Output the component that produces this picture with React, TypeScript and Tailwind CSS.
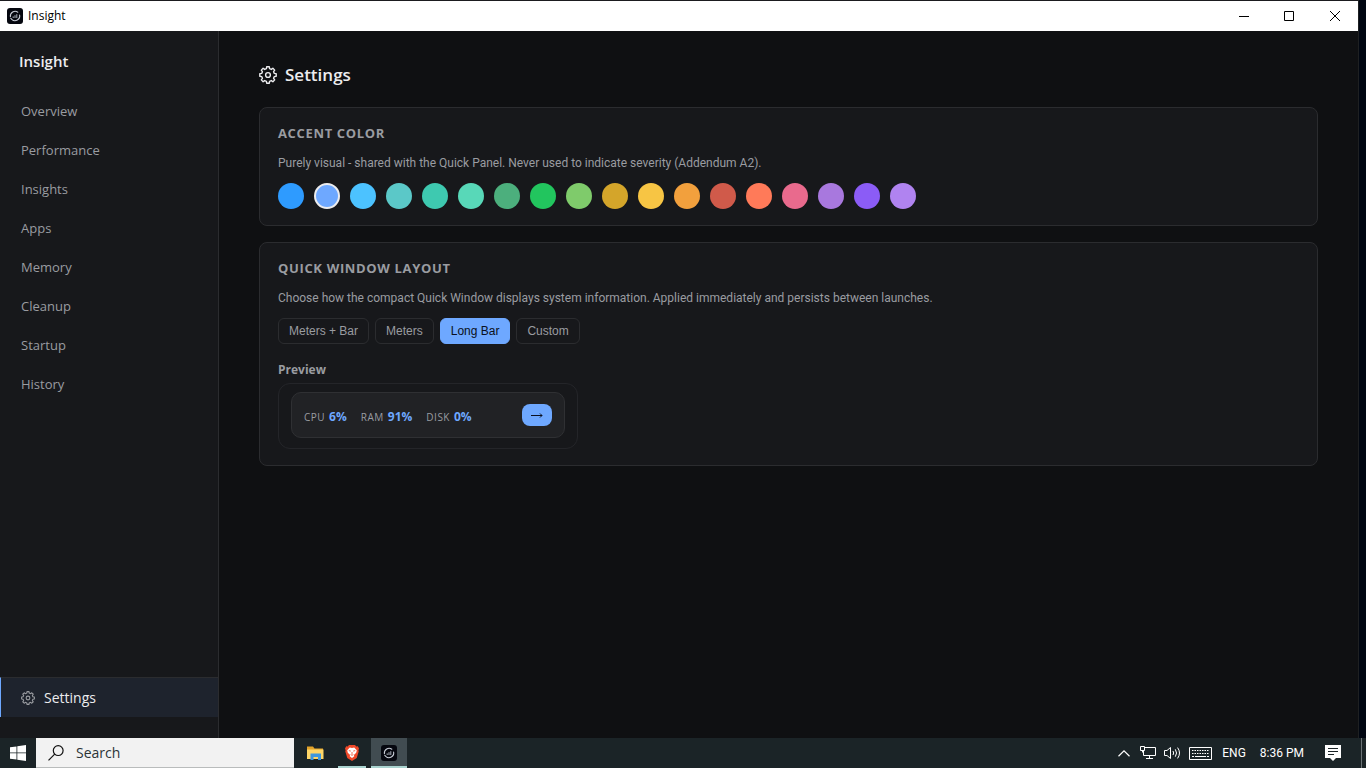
import React from "react";

const navItems = ["Overview", "Performance", "Insights", "Apps", "Memory", "Cleanup", "Startup", "History"];

const accents = [
  { name: "Azure", cls: "bg-[#2e9bff]" },
  { name: "Periwinkle", cls: "bg-[#6ea8ff]" },
  { name: "Sky", cls: "bg-[#4cc2ff]" },
  { name: "Lagoon", cls: "bg-[#5bc8c8]" },
  { name: "Teal", cls: "bg-[#3ec9b0]" },
  { name: "Mint", cls: "bg-[#58d8b8]" },
  { name: "Jade", cls: "bg-[#4caf7d]" },
  { name: "Green", cls: "bg-[#22c55e]" },
  { name: "Lime", cls: "bg-[#7fcb6b]" },
  { name: "Gold", cls: "bg-[#d4a52a]" },
  { name: "Yellow", cls: "bg-[#f7c544]" },
  { name: "Orange", cls: "bg-[#f2a03d]" },
  { name: "Brick", cls: "bg-[#d05a4a]" },
  { name: "Coral", cls: "bg-[#ff7a59]" },
  { name: "Rose", cls: "bg-[#e96a8d]" },
  { name: "Lavender", cls: "bg-[#a878de]" },
  { name: "Violet", cls: "bg-[#8b5cf6]" },
  { name: "Orchid", cls: "bg-[#b083f0]" },
];

const layouts = ["Meters + Bar", "Meters", "Long Bar", "Custom"];

const stats = [
  { label: "CPU", value: "6%" },
  { label: "RAM", value: "91%" },
  { label: "DISK", value: "0%" },
];

// eight teeth, each one valley -> tip -> valley
const gearPoints = Array.from({ length: 8 })
  .flatMap((_, i) =>
    [
      [-14, 6.5],
      [-9, 8.3],
      [9, 8.3],
      [14, 6.5],
    ].map(([deg, r]) => {
      const a = ((i * 45 + deg) * Math.PI) / 180;
      return `${(9 + r * Math.cos(a)).toFixed(2)},${(9 + r * Math.sin(a)).toFixed(2)}`;
    })
  )
  .join(" ");

function Gear({ size, className }: { size: number; className?: string }) {
  return (
    <svg
      width={size}
      height={size}
      viewBox="0 0 18 18"
      fill="none"
      stroke="currentColor"
      strokeWidth="1.4"
      strokeLinejoin="round"
      className={className}
      aria-hidden="true"
    >
      <polygon points={gearPoints} />
      <circle cx="9" cy="9" r="2.4" />
    </svg>
  );
}

function AppLogo() {
  return (
    <svg width="16" height="16" viewBox="0 0 16 16" fill="none" aria-hidden="true">
      <rect width="16" height="16" rx="3" fill="#05070f" />
      <path d="M3.4 8.6A4.7 4.7 0 0 1 10.8 4.2" stroke="#c9ced8" strokeWidth="1.1" strokeLinecap="round" />
      <path d="M12.6 7A4.7 4.7 0 0 1 4.8 11.4L3.8 10.4" stroke="#c9ced8" strokeWidth="1.1" strokeLinecap="round" />
      <path d="M6.2 8.4v1.6M8 7.2v2.8M9.8 6.2v3.8" stroke="#aab1bd" strokeWidth="1" />
    </svg>
  );
}

function TitleBar() {
  return (
    <header className="flex h-[31px] items-center border-t border-[#1b1b1f] bg-white text-black">
      <div className="flex flex-1 items-center gap-[5px] pl-[7px]">
        <AppLogo />
        <span className="text-xs">Insight</span>
      </div>
      <button aria-label="Minimize" className="flex h-full w-[45px] items-center justify-center">
        <svg width="10" height="10" viewBox="0 0 10 10" stroke="currentColor"><path d="M0 5.5h10" /></svg>
      </button>
      <button aria-label="Maximize" className="flex h-full w-[46px] items-center justify-center">
        <svg width="10" height="10" viewBox="0 0 10 10" fill="none" stroke="currentColor"><path d="M.5.5h9v9h-9z" /></svg>
      </button>
      <button aria-label="Close" className="flex h-full w-[46px] items-center justify-center">
        <svg width="10" height="10" viewBox="0 0 10 10" stroke="currentColor"><path d="M0 0l10 10M10 0L0 10" /></svg>
      </button>
    </header>
  );
}

function Sidebar() {
  return (
    <aside className="flex w-[219px] shrink-0 flex-col border-r border-[#2b2c2f] bg-[#17181b] pb-[21px]">
      <div className="px-[19px] pt-[19px] pb-5 text-[15px] leading-[22px] font-semibold text-[#ececee]">Insight</div>
      <nav className="flex flex-1 flex-col text-[13px] text-[#9a9ca1]">
        {navItems.map((item) => (
          <a key={item} href="#" className="flex h-[39px] items-center border-l border-transparent pl-5">
            {item}
          </a>
        ))}
        <a
          href="#"
          aria-current="page"
          className="mt-auto flex h-10 items-center gap-[9px] border-t border-l border-t-[#2b2c2f] border-l-[#6ea8ff] bg-[#1e232d] pl-5 text-sm text-[#ececee]"
        >
          <Gear size={14} className="text-[#9a9ca1]" />
          Settings
        </a>
      </nav>
    </aside>
  );
}

function Card({ title, desc, children }: { title: string; desc: string; children: React.ReactNode }) {
  return (
    <section className="rounded-lg border border-[#2b2c2f] bg-[#17181b] px-[18px] py-4">
      <h2 className="mb-3 text-[13px] leading-[18px] font-bold tracking-wider text-[#9a9ca1] uppercase">{title}</h2>
      <p className="mb-[10px] font-['Roboto',sans-serif] text-xs leading-[19px] text-[#9a9ca1]">{desc}</p>
      {children}
    </section>
  );
}

function Preview() {
  return (
    <div className="w-[300px] rounded-xl border border-[#242529] px-3 pt-2 pb-[10px]">
      <div className="flex h-[46px] items-center rounded-[10px] border border-[#2f3033] bg-[#212225] px-3">
        <div className="flex gap-[14px] pt-[3px]">
          {stats.map((s) => (
            <div key={s.label} className="flex items-baseline gap-1">
              <span className="text-[10px] tracking-wider text-[#9a9ca1]">{s.label}</span>
              <span className="text-xs font-bold text-[#6ea8ff]">{s.value}</span>
            </div>
          ))}
        </div>
        <button aria-label="Open" className="ml-auto flex h-[22px] w-[30px] items-center justify-center rounded-lg bg-[#6ea8ff] text-[#0b1020]">
          <svg width="12" height="7" viewBox="0 0 12 7" fill="none" stroke="currentColor">
            <path d="M0 3.5h11M9 1.5L11 3.5 9 5.5" />
          </svg>
        </button>
      </div>
    </div>
  );
}

function Main() {
  return (
    <main className="flex-1 bg-[#0f1012] px-10 pt-8">
      <h1 className="mb-5 flex items-center gap-2 text-[17px] leading-6 font-semibold text-[#ececee]">
        <Gear size={18} />
        Settings
      </h1>
      <div className="flex flex-col gap-4">
        <Card title="Accent color" desc="Purely visual - shared with the Quick Panel. Never used to indicate severity (Addendum A2).">
          <div className="flex flex-wrap gap-[10px]">
            {accents.map((a, i) => (
              <button
                key={a.name}
                aria-label={a.name}
                className={`size-[26px] rounded-full ${a.cls} ${i === 1 ? "border-2 border-[#ececee]" : ""}`}
              />
            ))}
          </div>
        </Card>
        <Card
          title="Quick window layout"
          desc="Choose how the compact Quick Window displays system information. Applied immediately and persists between launches."
        >
          <div className="flex gap-[6px] font-['Liberation_Sans',sans-serif] text-xs">
            {layouts.map((l) => (
              <button
                key={l}
                className={`h-[26px] rounded-md border px-[10px] ${
                  l === "Long Bar" ? "border-[#6ea8ff] bg-[#6ea8ff] text-[#0b1020]" : "border-[#2b2c2f] text-[#9a9ca1]"
                }`}
              >
                {l}
              </button>
            ))}
          </div>
          <h3 className="mt-4 mb-1 text-xs leading-[19px] font-bold text-[#9a9ca1]">Preview</h3>
          <Preview />
        </Card>
      </div>
    </main>
  );
}

function Taskbar() {
  return (
    <footer className="flex h-[30px] items-stretch bg-[#1b2427] text-white">
      <button aria-label="Start" className="flex w-9 items-center justify-center">
        <svg width="16" height="16" viewBox="0 0 16 16" fill="currentColor">
          <path d="M0 2.3L6.5 1.4V7.5H0zM7.3 1.3L16 0v7.5H7.3zM0 8.3h6.5v6.2L0 13.7zM7.3 8.3H16V16l-8.7-1.3z" />
        </svg>
      </button>
      <label className="flex w-[258px] items-center gap-3 border-b border-[#b9bcbc] bg-[#f2f2f2] pl-3 text-[#1f2a2e]">
        <svg width="16" height="16" viewBox="0 0 16 16" fill="none" stroke="#111" strokeWidth="1.2">
          <circle cx="10.2" cy="5.6" r="4.9" />
          <path d="M6.7 9.1L.5 15.4" />
        </svg>
        <input type="text" placeholder="Search" aria-label="Search" className="w-40 bg-transparent text-sm outline-none placeholder:text-[#2b3437]" />
      </label>
      <div className="flex gap-[1px] pl-[3px]">
        <button aria-label="File Explorer" className="flex w-9 items-center justify-center">
          <svg width="17" height="15" viewBox="0 0 17 15">
            <path d="M0 .5h6L7.5 2.5H16V5H0z" fill="#e3a32a" />
            <path d="M0 3.5h16.5V13H0z" fill="#ffd667" />
            <path d="M3.5 7.5H14V14h-3v-3H6.500v3h-3z" fill="#3f97dd" />
          </svg>
        </button>
        <button aria-label="Brave" className="relative flex w-9 items-center justify-center">
          <svg width="14" height="16" viewBox="0 0 14 16">
            <path d="M4 0h6l1.3 1.4 1.5-.1L14 3.6l-.6 1.6.3 1.2-2 6.6L7 16l-4.7-3-2-6.6.3-1.2L0 3.6l1.2-2.3 1.5.1z" fill="#f0492a" />
            <path d="M7 3l2.2-.5 2.6 2.7-.6 2.6-2.3 2.1.4 1.3L7 13l-2.3-1.8.4-1.3-2.3-2.1-.6-2.6 2.6-2.7z" fill="#fff" />
            <path d="M3.8 5.6l2 .5M10.2 5.6l-2 .5M7 7v2.4M5.6 9.6L7 10.3l1.4-.7" stroke="#f0492a" strokeWidth=".8" fill="none" />
          </svg>
          <span className="absolute inset-x-1 bottom-0 h-0.5 bg-[#a9d3cf]" />
        </button>
        <button aria-label="Insight" className="relative flex w-9 items-center justify-center bg-[#414c51]">
          <AppLogo />
          <span className="absolute inset-x-0 bottom-0 h-0.5 bg-[#a9d3cf]" />
        </button>
      </div>
      <div className="ml-auto flex items-center font-['Roboto',sans-serif] text-xs">
        <button aria-label="Show hidden icons" className="mr-[10px]">
          <svg width="12" height="7" viewBox="0 0 12 7" fill="none" stroke="currentColor" strokeWidth="1.2"><path d="M.5 6.3L6 .9l5.5 5.4" /></svg>
        </button>
        <svg className="mr-2" width="16" height="14" viewBox="0 0 16 14" fill="none" stroke="currentColor">
          <path d="M5 1.5h10.5v8h-12V5M.5.5h4v4h-4zM2.5 4.5v2M9.5 9.5v3M6 12.5h7" />
        </svg>
        <svg className="mr-2" width="17" height="14" viewBox="0 0 17 14" fill="none" stroke="currentColor">
          <path d="M.5 4.5H3l3.5-3v11L3 9.500H.5zM9 5q1.300 2 0 4M11.300 3.300q2.500 3.700 0 7.400M13.600 1.600q3.800 5.400 0 10.800" />
        </svg>
        <svg className="mr-[10px]" width="23" height="13" viewBox="0 0 23 13" fill="none" stroke="currentColor">
          <path d="M.5.5h22v12H.5z" />
          <path d="M3 3.5h17M3 6.5h17" strokeDasharray="1.5 1" />
          <path d="M3 9.5h2M6 9.5h11M18 9.5h2" />
        </svg>
        <span className="mr-[14px]">ENG</span>
        <span className="mr-[21px]">8:36 PM</span>
        <button aria-label="Notifications">
          <svg width="16" height="16" viewBox="0 0 16 16">
            <path d="M0 0h16v13h-5l-3 3-3-3H0z" fill="#fff" />
            <path d="M3 3.5h10M3 6.5h10M3 9.5h6" stroke="#1b2427" />
          </svg>
        </button>
        <div className="ml-5 h-full w-[5px] border-l border-[#6b7376]" />
      </div>
    </footer>
  );
}

export default function App() {
  return (
    <div className="flex min-h-screen flex-col bg-[#000611] font-['Open_Sans',sans-serif]">
      <div className="mr-[7px] flex flex-1 flex-col border-r border-[#1e2022]">
        <TitleBar />
        <div className="flex flex-1">
          <Sidebar />
          <Main />
        </div>
      </div>
      <Taskbar />
    </div>
  );
}
